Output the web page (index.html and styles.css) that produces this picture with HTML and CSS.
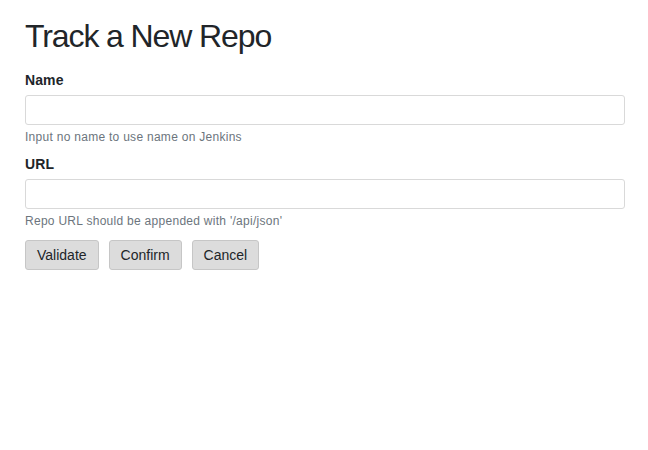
FILE: index.html
```html
<!DOCTYPE html>
<html lang="en">
<head>
<meta charset="utf-8">
<title>Track a New Repo</title>
<link rel="stylesheet" href="styles.css">
</head>
<body>
<main class="page">
  <h1 class="title">Track a New Repo</h1>
  <form class="form">
    <div class="group">
      <label class="label" for="name">Name</label>
      <input class="input" id="name" type="text">
      <div class="help">Input no name to use name on Jenkins</div>
    </div>
    <div class="group">
      <label class="label" for="url">URL</label>
      <input class="input" id="url" type="text">
      <div class="help">Repo URL should be appended with '/api/json'</div>
    </div>
    <div class="actions">
      <button class="btn" type="button">Validate</button>
      <button class="btn" type="button">Confirm</button>
      <button class="btn" type="button">Cancel</button>
    </div>
  </form>
</main>
</body>
</html>
```
FILE: styles.css
```css
html, body {
  margin: 0;
  padding: 0;
  background: #ffffff;
}
body {
  font-family: "Liberation Sans", Arial, sans-serif;
  color: #212529;
}
.page {
  padding: 17px 25px 0 25px;
  width: 600px;
}
.title {
  margin: 0 0 15px 0;
  font-size: 32px;
  line-height: 38px;
  font-weight: 400;
  letter-spacing: -1.1px;
  color: #212529;
}
.form {
  display: flex;
  flex-direction: column;
}
.group {
  display: flex;
  flex-direction: column;
  margin-bottom: 8px;
}
.label {
  font-size: 14px;
  line-height: 21px;
  font-weight: 700;
  letter-spacing: 0.1px;
  margin-bottom: 4px;
}
.input {
  box-sizing: border-box;
  height: 30px;
  width: 600px;
  margin: 0;
  border: 1px solid #d9d9d9;
  border-radius: 3px;
  background: #ffffff;
  font-size: 14px;
  padding: 0 8px;
}
.help {
  margin-top: 3px;
  font-size: 12px;
  line-height: 18px;
  letter-spacing: 0.28px;
  color: #6c757d;
}
.actions {
  display: flex;
  gap: 10px;
  margin-top: 2px;
}
.btn {
  box-sizing: border-box;
  height: 30px;
  padding: 0 11px;
  font-family: "Liberation Sans", Arial, sans-serif;
  font-size: 14px;
  color: #212529;
  background: #dcdcdc;
  border: 1px solid #c6c6c6;
  border-radius: 3px;
}
```
